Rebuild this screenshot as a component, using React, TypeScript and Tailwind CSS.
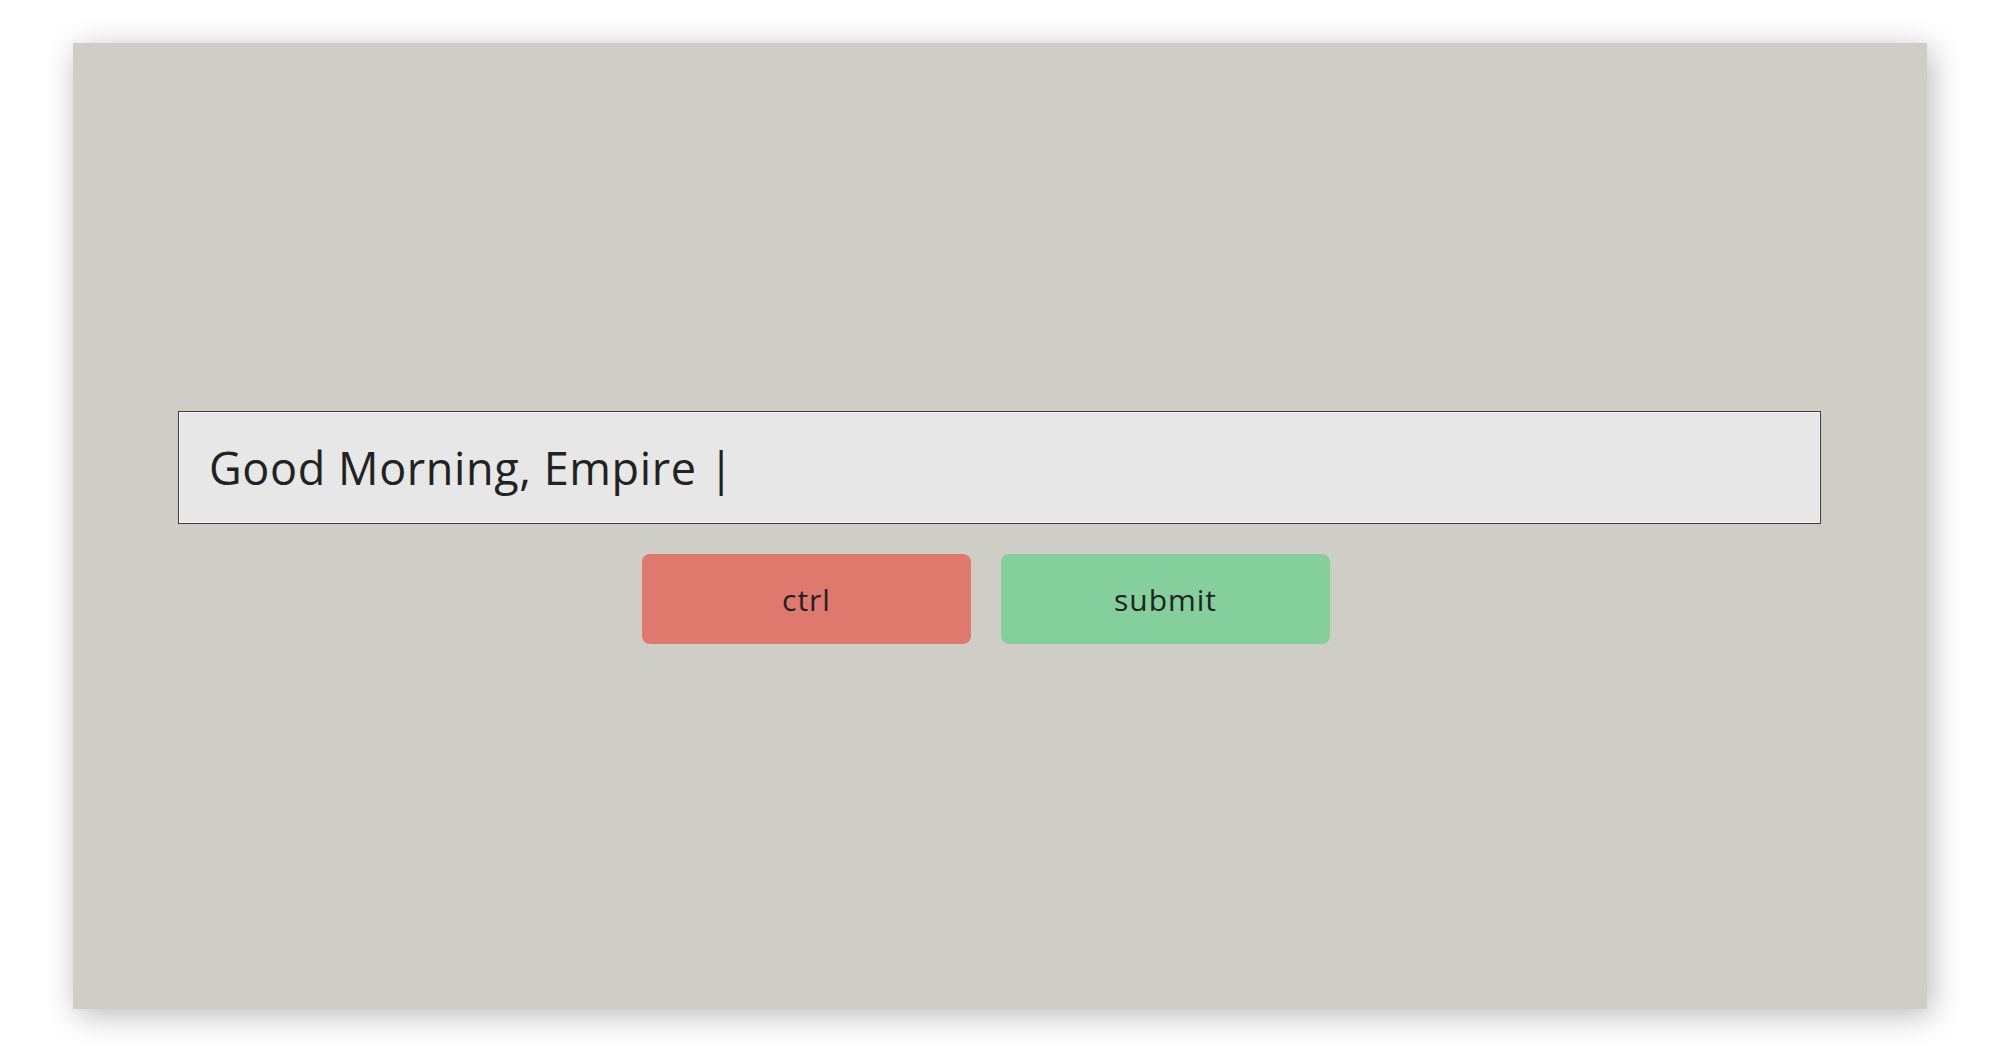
export default function App() {
  return (
    <div className="w-[2000px] h-[1050px] bg-white overflow-hidden" style={{ fontFamily: '"Open Sans", sans-serif' }}>
      <div className="ml-[73px] mt-[43px] w-[1854px] h-[966px] bg-[#cfcec6] shadow-[4px_6px_30px_rgba(0,0,0,0.28)] flex flex-col pt-[368px]">
        <div className="ml-[105px] w-[1643px] h-[113px] bg-[#e7e7e7] border border-[#3e3e3e] shadow-[inset_0_0_0_1px_#f4f4f4] flex items-center pl-[30px]">
          <span className="text-[45px] text-[#222] tracking-[0.6px]">Good Morning, Empire |</span>
        </div>
        <div className="flex mt-[30px] ml-[569px] gap-[30px]">
          <button className="w-[329px] h-[90px] rounded-[8px] bg-[#df786d] text-[30px] text-[#222] tracking-[1px] flex items-center justify-center">ctrl</button>
          <button className="w-[329px] h-[90px] rounded-[8px] bg-[#84cf9b] text-[30px] text-[#222] tracking-[1px] flex items-center justify-center">submit</button>
        </div>
      </div>
    </div>
  );
}
